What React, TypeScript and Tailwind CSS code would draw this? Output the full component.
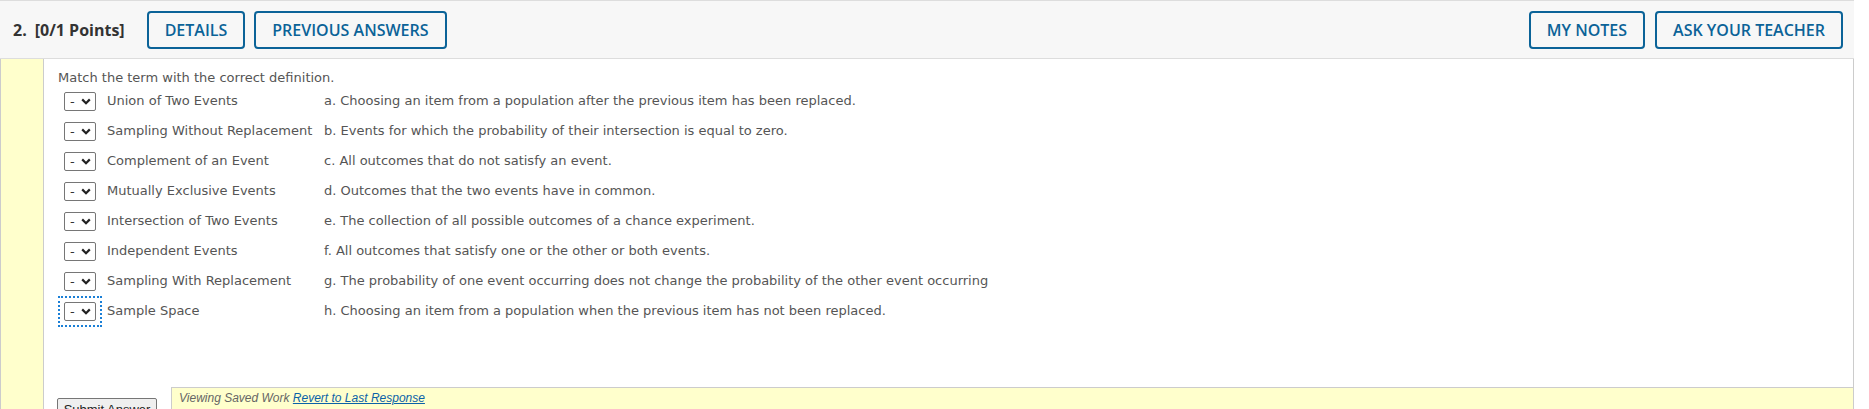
import React from "react";

const rows = [
  ["Union of Two Events", "a. Choosing an item from a population after the previous item has been replaced."],
  ["Sampling Without Replacement", "b. Events for which the probability of their intersection is equal to zero."],
  ["Complement of an Event", "c. All outcomes that do not satisfy an event."],
  ["Mutually Exclusive Events", "d. Outcomes that the two events have in common."],
  ["Intersection of Two Events", "e. The collection of all possible outcomes of a chance experiment."],
  ["Independent Events", "f. All outcomes that satisfy one or the other or both events."],
  ["Sampling With Replacement", "g. The probability of one event occurring does not change the probability of the other event occurring"],
  ["Sample Space", "h. Choosing an item from a population when the previous item has not been replaced."],
];

const HeaderButton = ({ label }: { label: string }) => (
  <button className="h-[38px] px-4 border-2 border-[#0b6398] rounded-[4px] text-[#0b6398] text-[16px] font-semibold uppercase bg-transparent leading-none">
    {label}
  </button>
);

const MiniSelect = ({ focused }: { focused?: boolean }) => (
  <div
    className={
      "p-[4px] border-2 " + (focused ? "border-dotted border-[#1a7fd6]" : "border-transparent")
    }
  >
    <div className="w-[32px] h-[19px] border border-[#767676] rounded-[2px] bg-white flex items-center pl-[5px] gap-[6px] text-[13px] text-[#333]">
      <span className="leading-none">-</span>
      <svg width="10" height="7" viewBox="0 0 10 7">
        <path d="M1.2 1.4 L5 5.2 L8.8 1.4" fill="none" stroke="#222" strokeWidth="2.2" />
      </svg>
    </div>
  </div>
);

export default function App() {
  return (
    <div className="w-[1869px] h-[409px] overflow-hidden bg-white">
      <div className="w-[1854px]">
        {/* question header */}
        <div
          className="h-[59px] bg-[#f7f7f7] border-y border-[#dddddd] flex items-center pl-[13px] pr-[11px] text-[#333]"
          style={{ fontFamily: '"Open Sans", sans-serif' }}
        >
          <span className="text-[16px] font-bold mr-[8px]">2.</span>
          <span className="text-[16px] font-bold">[0/1 Points]</span>
          <div className="flex gap-[9px] ml-[22px]">
            <HeaderButton label="Details" />
            <HeaderButton label="Previous Answers" />
          </div>
          <div className="flex gap-[10px] ml-auto">
            <HeaderButton label="My Notes" />
            <HeaderButton label="Ask Your Teacher" />
          </div>
        </div>

        <div className="flex">
          <div className="w-[44px] shrink-0 bg-[#ffffcc] border-l border-r border-[#cccccc]" />
          <div className="flex-1 border-r border-[#cccccc] text-[#555]" style={{ fontFamily: '"DejaVu Sans", Verdana, sans-serif' }}>
            <div className="pl-[14px] pt-[10px]">
              <p className="text-[13px] leading-[17px] h-[17px]">Match the term with the correct definition.</p>
              <div>
                {rows.map(([term, def], i) => (
                  <div key={term} className="h-[30px] flex items-center text-[13px]">
                    <div className="mr-[5px]">
                      <MiniSelect focused={i === rows.length - 1} />
                    </div>
                    <span className="w-[217px] shrink-0 whitespace-nowrap">{term}</span>
                    <span className="whitespace-nowrap">{def}</span>
                  </div>
                ))}
              </div>
            </div>

            <div className="flex items-start mt-[61px]">
              <button
                className="mt-[11px] ml-[13px] mr-[14px] w-[100px] h-[24px] bg-[#efefef] border border-[#767676] rounded-[2px] text-[13px] text-[#222] shrink-0"
                style={{ fontFamily: '"Liberation Sans", Arial, sans-serif' }}
              >
                Submit Answer
              </button>
              <div
                className="flex-1 h-[30px] bg-[#ffffcc] border-t border-l border-[#cccccc] pl-[7px] pt-[1px] text-[12px] italic text-[#666]"
                style={{ fontFamily: '"Liberation Sans", Arial, sans-serif' }}
              >
                Viewing Saved Work <a className="text-[#0b62a8] underline">Revert to Last Response</a>
              </div>
            </div>
          </div>
        </div>
      </div>
    </div>
  );
}
